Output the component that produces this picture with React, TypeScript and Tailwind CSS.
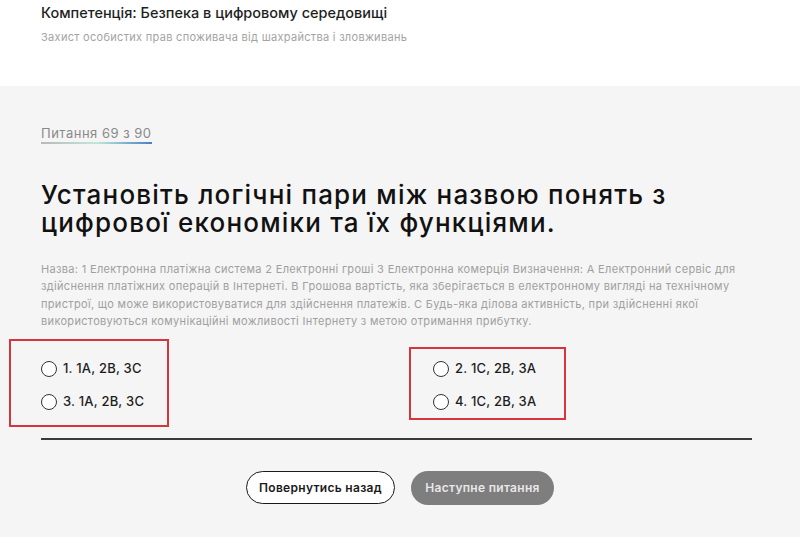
import React from "react";

const options = [
  { id: 1, label: "1. 1A, 2B, 3C" },
  { id: 2, label: "2. 1C, 2B, 3A" },
  { id: 3, label: "3. 1A, 2B, 3C" },
  { id: 4, label: "4. 1C, 2B, 3A" },
];

function Radio({ label }: { label: string }) {
  return (
    <label className="flex items-center gap-[6px] h-5 cursor-pointer">
      <span className="w-4 h-4 rounded-full border-[1.5px] border-[#333] bg-white shrink-0" />
      <span className="text-[13px] font-medium text-[#1d1d1d] tracking-[0.2px]">{label}</span>
    </label>
  );
}

export default function App() {
  return (
    <div className="relative w-[800px] h-[537px] overflow-hidden flex flex-col font-['Inter','Noto_Sans',sans-serif]">
      <div className="bg-white h-[86px] shrink-0 px-[41px] pt-[3px]">
        <h2 className="text-[14.5px] leading-[20px] font-medium text-[#1e1e1e]">Компетенція: Безпека в цифровому середовищі</h2>
        <p className="mt-[6px] text-[11px] leading-[16px] text-[#a3a3a3] tracking-[0.3px]">Захист особистих прав споживача від шахрайства і зловживань</p>
      </div>

      <div className="flex-1 bg-[#f5f5f5] px-[41px] pt-[34px]">
        <div className="inline-block">
          <span className="block text-[13px] leading-[16px] text-[#8a8a8a] tracking-[0.5px]">Питання 69 з 90</span>
          <div className="mt-[1px] h-[2px] w-full bg-gradient-to-r from-[#b9b9b9] via-[#bfe8d8] to-[#4d7fc4]" />
        </div>

        <h1 className="mt-[37px] text-[26px] leading-[28px] font-medium text-[#111] tracking-[1.2px]">
          Установіть логічні пари між назвою понять з<br />
          цифрової економіки та їх функціями.
        </h1>

        <p className="mt-[24px] text-[11px] leading-[17.3px] text-[#a0a0a0] tracking-[0.33px]">
          Назва: 1 Електронна платіжна система 2 Електронні гроші 3 Електронна комерція Визначення: A Електронний сервіс для<br />
          здійснення платіжних операцій в Інтернеті. B Грошова вартість, яка зберігається в електронному вигляді на технічному<br />
          пристрої, що може використовуватися для здійснення платежів. C Будь-яка ділова активність, при здійсненні якої<br />
          використовуються комунікаційні можливості Інтернету з метою отримання прибутку.
        </p>

        <div className="mt-[29px] grid grid-cols-[392px_1fr] gap-y-[13px]">
          {options.map((o) => (
            <Radio key={o.id} label={o.label} />
          ))}
        </div>

        <div className="mt-[26px] h-[2px] w-[711px] bg-[#3a3a3a]" />

        <div className="mt-[31px] flex justify-center gap-4">
          <button className="w-[149px] h-[33px] rounded-full border-[1.5px] border-[#1a1a1a] bg-white text-[12px] font-semibold text-[#1a1a1a] tracking-[0.3px]">
            Повернутись назад
          </button>
          <button className="w-[143px] h-[34px] rounded-full bg-[#7e7e7e] text-[12px] font-semibold text-[#e8e8e8] tracking-[0.3px]">
            Наступне питання
          </button>
        </div>
      </div>

      <div className="absolute left-[9px] top-[339px] w-[160px] h-[88px] border-2 border-[#d6353c] pointer-events-none" />
      <div className="absolute left-[409px] top-[347px] w-[157px] h-[73px] border-2 border-[#d6353c] pointer-events-none" />
    </div>
  );
}
